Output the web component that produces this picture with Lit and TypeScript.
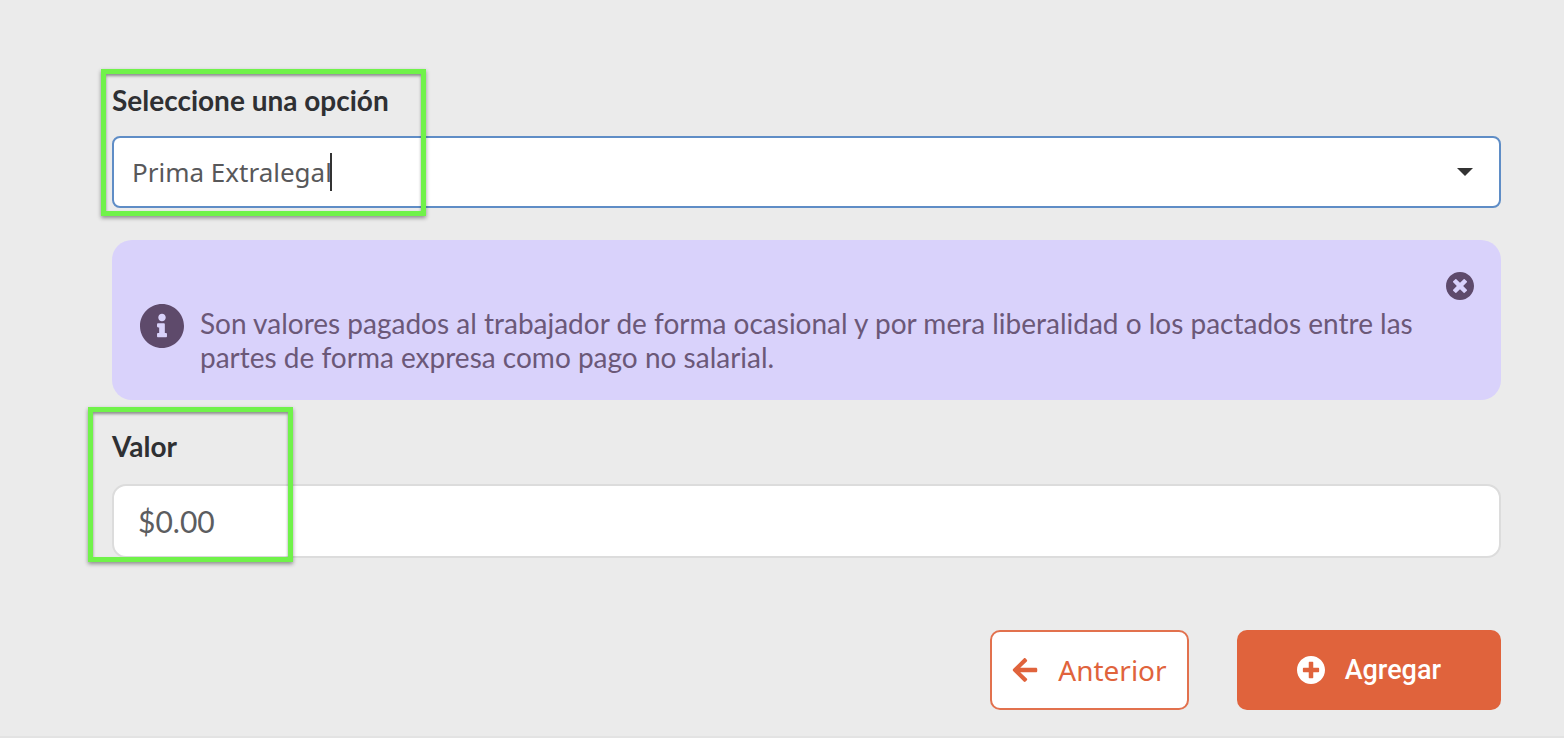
import { LitElement, html, css, svg } from "lit";
import { customElement, state } from "lit/decorators.js";

const infoIcon = svg`<path d="M256 8C119.043 8 8 119.083 8 256c0 136.997 111.043 248 248 248s248-111.003 248-248C504 119.083 392.957 8 256 8zm0 110c23.196 0 42 18.804 42 42s-18.804 42-42 42-42-18.804-42-42 18.804-42 42-42zm56 254c0 6.627-5.373 12-12 12h-88c-6.627 0-12-5.373-12-12v-24c0-6.627 5.373-12 12-12h12v-64h-12c-6.627 0-12-5.373-12-12v-24c0-6.627 5.373-12 12-12h64c6.627 0 12 5.373 12 12v100h12c6.627 0 12 5.373 12 12v24z"/>`;
const closeIcon = svg`<path d="M256 8C119 8 8 119 8 256s111 248 248 248 248-111 248-248S393 8 256 8zm121.600 313.100c4.700 4.700 4.700 12.300 0 17L338 377.600c-4.700 4.700-12.300 4.700-17 0L256 312l-65.100 65.600c-4.700 4.700-12.300 4.700-17 0L134.400 338c-4.700-4.700-4.700-12.300 0-17l65.600-65-65.600-65.100c-4.700-4.700-4.700-12.300 0-17l39.600-39.600c4.700-4.700 12.300-4.700 17 0l65 65.700 65.100-65.600c4.700-4.700 12.300-4.700 17 0l39.600 39.600c4.700 4.700 4.700 12.300 0 17L312 256l65.600 65.100z"/>`;
const plusIcon = svg`<path d="M256 8C119 8 8 119 8 256s111 248 248 248 248-111 248-248S393 8 256 8zm144 276c0 6.600-5.400 12-12 12h-92v92c0 6.600-5.400 12-12 12h-56c-6.600 0-12-5.400-12-12v-92h-92c-6.600 0-12-5.400-12-12v-56c0-6.600 5.400-12 12-12h92v-92c0-6.600 5.400-12 12-12h56c6.600 0 12 5.400 12 12v92h92c6.600 0 12 5.400 12 12v56z"/>`;
const backIcon = svg`<path d="M257.500 445.100l-22.200 22.200c-9.400 9.400-24.600 9.400-33.900 0L7 273c-9.400-9.400-9.400-24.600 0-33.900L201.400 44.700c9.400-9.400 24.600-9.400 33.900 0l22.200 22.200c9.500 9.500 9.300 25-.4 34.300L136.600 216H424c13.300 0 24 10.700 24 24v32c0 13.300-10.700 24-24 24H136.600l120.500 114.800c9.800 9.300 10 24.800.4 34.300z"/>`;

@customElement("app-root")
export class AppRoot extends LitElement {
  @state() private option = "Prima Extralegal";
  @state() private amount = "$0.00";
  @state() private showInfo = true;

  static styles = css`
    :host {
      display: block;
      min-height: 100vh;
      background: #fff;
      font-family: Lato, "Liberation Sans", sans-serif;
    }
    * {
      box-sizing: border-box;
    }
    svg {
      display: block;
      flex: none;
      fill: currentColor;
    }
    input,
    button {
      font: inherit;
      color: inherit;
      margin: 0;
      padding: 0;
      border: 0;
      background: none;
      outline: none;
    }
    button {
      cursor: pointer;
    }
    .form {
      display: flex;
      flex-direction: column;
      padding: 80px 63px 26px 112px;
      background: #ebebeb;
      border-bottom: 2px solid #e3e3e3;
    }
    .field {
      position: relative;
      display: flex;
      flex-direction: column;
      gap: 16px;
    }
    .field-amount {
      gap: 18px;
    }
    .label {
      align-self: flex-start;
      font-size: 28px;
      line-height: 40px;
      font-weight: 700;
      color: #2f3033;
    }
    .combo {
      display: flex;
      align-items: center;
      height: 72px;
      padding: 0 26px 0 18px;
      border: 2px solid #5f8dc6;
      border-radius: 8px;
      background: #fff;
    }
    .combo-input {
      field-sizing: content;
      font-family: "Noto Sans", sans-serif;
      font-size: 26px;
      line-height: 40px;
      color: #58585a;
    }
    .caret {
      width: 2px;
      height: 38px;
      margin-left: -2px;
      background: #333;
    }
    .toggle {
      margin-left: auto;
      color: #333;
    }
    .info {
      display: flex;
      flex-direction: column;
      gap: 4px;
      margin: 32px 0 26px;
      padding: 32px 27px 26px 28px;
      border-radius: 20px;
      background: #d9d2fb;
      color: #5e4a6b;
    }
    .close {
      align-self: flex-end;
    }
    .info-body {
      display: flex;
      align-items: flex-start;
      gap: 16px;
    }
    .info-text {
      margin: 0;
      padding-top: 2px;
      font-size: 28px;
      line-height: 34px;
      color: #6b5878;
    }
    .amount {
      width: 100%;
      height: 74px;
      padding: 0 24px;
      border: 2px solid #dcdcdc;
      border-radius: 14px;
      background: #fff;
      font-size: 30px;
      color: #5c5d60;
    }
    .mark {
      position: absolute;
      border: 5px solid #70f24a;
      box-shadow:
        0 2px 4px rgba(0, 0, 0, 0.4),
        inset 0 2px 3px rgba(0, 0, 0, 0.4);
      pointer-events: none;
    }
    .mark-option {
      left: -11px;
      top: -11px;
      bottom: -8px;
      width: 325px;
    }
    .mark-amount {
      left: -24px;
      top: -19px;
      bottom: -4px;
      width: 205px;
    }
    .actions {
      display: flex;
      justify-content: flex-end;
      gap: 48px;
      margin-top: 72px;
    }
    .btn {
      display: flex;
      align-items: center;
      justify-content: center;
      gap: 20px;
      height: 80px;
      border-radius: 10px;
    }
    .back {
      padding: 0 20px;
      border: 2px solid #e2714e;
      background: #fff;
      color: #e0633c;
      font-family: "Noto Sans", sans-serif;
      font-size: 28px;
    }
    .add {
      padding: 0 60px;
      background: #e0633c;
      color: #fff;
      font-family: Roboto, sans-serif;
      font-size: 27px;
      font-weight: 500;
    }
  `;

  render() {
    return html`
      <form class="form" @submit=${(e: Event) => e.preventDefault()}>
        <div class="field">
          <label class="label" for="option">Seleccione una opción</label>
          <div class="combo">
            <input
              id="option"
              class="combo-input"
              role="combobox"
              aria-expanded="false"
              autocomplete="off"
              .value=${this.option}
              @input=${(e: Event) => (this.option = (e.target as HTMLInputElement).value)}
            />
            <span class="caret"></span>
            <button class="toggle" type="button" aria-label="Abrir opciones">
              <svg width="16" height="8" viewBox="0 0 16 8"><path d="M0 0h16L8 8z" /></svg>
            </button>
          </div>
          <span class="mark mark-option"></span>
        </div>

        ${this.showInfo
          ? html`<div class="info" role="note">
              <button
                class="close"
                type="button"
                aria-label="Cerrar"
                @click=${() => (this.showInfo = false)}
              >
                <svg width="28" height="28" viewBox="8 8 496 496">${closeIcon}</svg>
              </button>
              <div class="info-body">
                <svg width="44" height="44" viewBox="8 8 496 496">${infoIcon}</svg>
                <p class="info-text">
                  Son valores pagados al trabajador de forma ocasional y por mera liberalidad o los
                  pactados entre las partes de forma expresa como pago no salarial.
                </p>
              </div>
            </div>`
          : null}

        <div class="field field-amount">
          <label class="label" for="amount">Valor</label>
          <input
            id="amount"
            class="amount"
            inputmode="decimal"
            .value=${this.amount}
            @input=${(e: Event) => (this.amount = (e.target as HTMLInputElement).value)}
          />
          <span class="mark mark-amount"></span>
        </div>

        <div class="actions">
          <button class="btn back" type="button">
            <svg width="26" height="28" viewBox="0 0 448 512">${backIcon}</svg>
            <span>Anterior</span>
          </button>
          <button class="btn add" type="submit">
            <svg width="28" height="28" viewBox="8 8 496 496">${plusIcon}</svg>
            <span>Agregar</span>
          </button>
        </div>
      </form>
    `;
  }
}
